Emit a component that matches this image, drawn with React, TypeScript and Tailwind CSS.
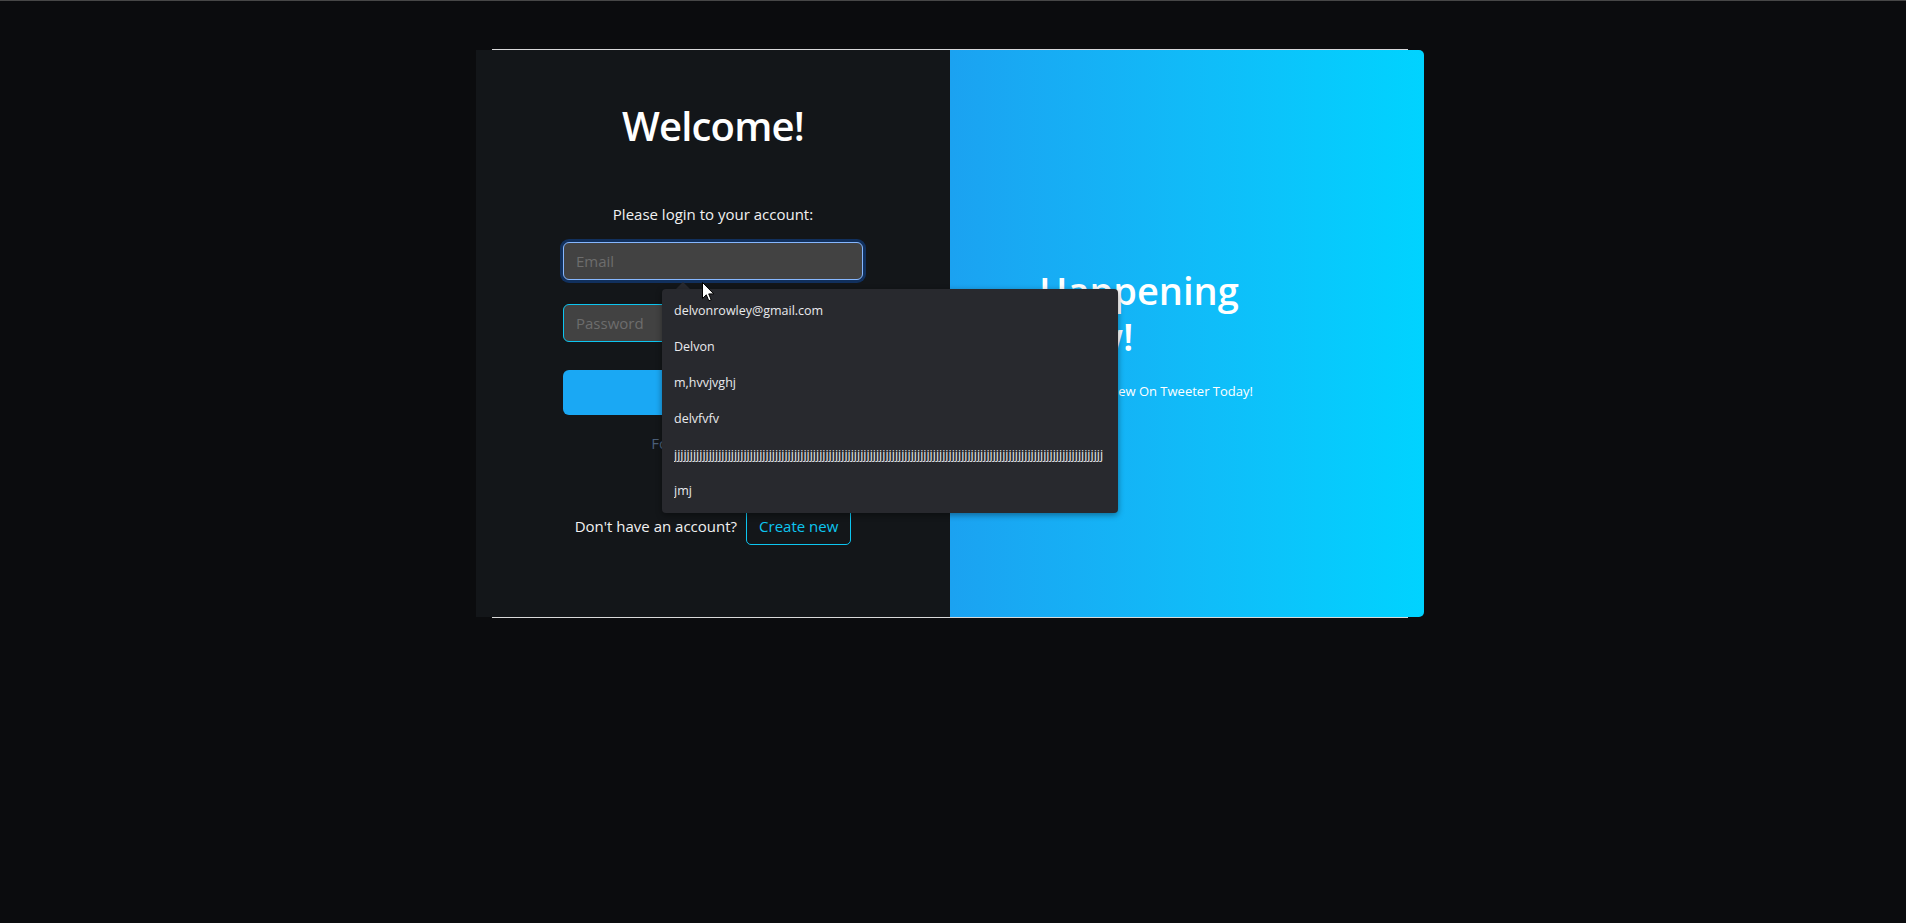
const SUGGESTIONS = [
  "delvonrowley@gmail.com",
  "Delvon",
  "m,hvvjvghj",
  "delvfvfv",
  "j".repeat(136),
  "jmj",
]

function Cursor() {
  return (
    <svg width="13" height="20" viewBox="0 0 13 20" className="block">
      <path
        d="M0.5 0.5 L0.5 16.5 L4.3 12.8 L6.8 18.8 L9.2 17.8 L6.7 11.9 L11.8 11.9 Z"
        fill="#fff"
        stroke="#000"
        strokeWidth="1"
        strokeLinejoin="round"
      />
    </svg>
  )
}

export default function App() {
  return (
    <div className="min-h-screen bg-[#0b0c0e] font-['Open_Sans',sans-serif]">
      <div className="h-px bg-[#474747]" />

      <div className="pt-[48px]">
        <div className="relative ml-[492px] w-[916px] border-y border-[#d9d9d9]">
          {/* Card */}
          <div className="-mx-4 flex h-[567px]">
            {/* Login side */}
            <div className="flex w-[474px] flex-col items-center bg-[#131619] pt-[52px]">
              <h1 className="text-[40px] leading-[48px] font-semibold tracking-[-0.8px] text-white">Welcome!</h1>

              <p className="mt-[52px] text-[15px] leading-[24px] text-[#f1f1f1]">
                Please login to your account:
              </p>

              <div className="mt-[16px] h-[38px] w-[300px] rounded-[6px] border border-[#86b7fe] bg-[#424242] px-3 text-[15px] leading-[36px] text-[#6d6d6d] shadow-[0_0_0_3px_rgba(13,110,253,0.3)]">
                Email
              </div>

              <div className="mt-[24px] h-[38px] w-[300px] rounded-[6px] border border-[#0dc5f0] bg-[#424242] px-3 text-[15px] leading-[36px] text-[#6d6d6d]">
                Password
              </div>

              <button className="mt-[28px] h-[45px] w-[300px] rounded-[6px] bg-[#1aa8f4] text-[15px] text-white">
                Login
              </button>

              <a className="mt-[16px] text-[15px] leading-[24px] text-[#4b5f78]">Forgot password?</a>

              <div className="mt-[52px] flex items-center gap-[9px]">
                <span className="text-[15px] text-[#f1f1f1]">Don't have an account?</span>
                <button className="h-[38px] rounded-[5px] border border-[#0dc5f0] px-[12px] text-[15px] text-[#0dc5f0]">
                  Create new
                </button>
              </div>
            </div>

            {/* Promo side */}
            <div className="flex w-[474px] items-center justify-center rounded-r-[5px] bg-linear-to-r from-[#1ba2f1] to-[#00d3ff]">
              <div className="w-[296px] text-white">
                <h2 className="text-[38px] leading-[46px] font-semibold">Happening Now!</h2>
                <p className="mt-[22px] text-[13px] leading-[20px]">See What's New On Tweeter Today!</p>
              </div>
            </div>
          </div>

          {/* Autofill suggestions popup */}
          <svg width="14" height="7" viewBox="0 0 14 7" className="absolute top-[232px] left-[184px]">
            <path d="M0 7 L7 0 L14 7 Z" fill="#28292e" />
          </svg>
          <div className="absolute top-[239px] left-[170px] w-[456px] rounded-[4px] bg-[#28292e] py-[4px] shadow-[0_2px_6px_rgba(0,0,0,0.4)]">
            {SUGGESTIONS.map((s, i) => (
              <div
                key={i}
                className="h-[36px] px-[12px] text-[12.5px] leading-[36px] whitespace-nowrap text-[#e8eaed]"
              >
                <div className="w-[432px] overflow-hidden">{s}</div>
              </div>
            ))}
          </div>

          <div className="absolute top-[232px] left-[210px]">
            <Cursor />
          </div>
        </div>
      </div>
    </div>
  )
}
